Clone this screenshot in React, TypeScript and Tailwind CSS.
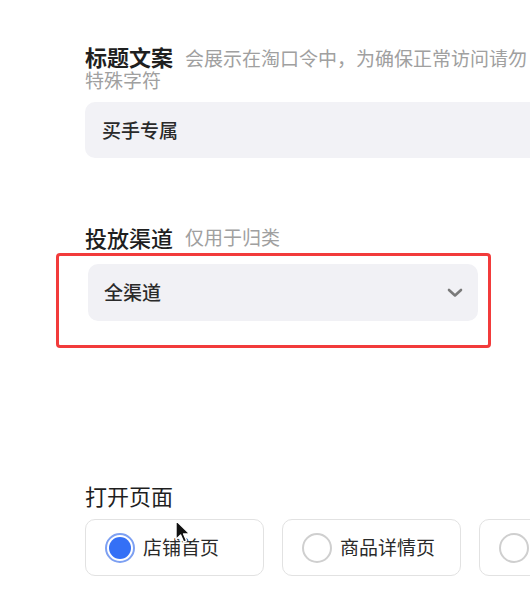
const font = { fontFamily: '"Noto Sans CJK SC", "Noto Sans", sans-serif' };

const Radio = ({ checked }: { checked?: boolean }) =>
    checked ? (
        <span className="flex h-[30px] w-[30px] shrink-0 items-center justify-center rounded-full border-2 border-[#7da0f2] bg-white">
            <span className="h-[22px] w-[22px] rounded-full bg-[#3470f6]" />
        </span>
    ) : (
        <span className="h-[30px] w-[30px] shrink-0 rounded-full border-2 border-[#cfcfcf] bg-white" />
    );

const options = [
    { label: '店铺首页', checked: true },
    { label: '商品详情页', checked: false },
    { label: '自定义链接', checked: false },
];

const App = () => {
    return (
        <div className="relative h-[596px] w-[530px] overflow-hidden bg-white text-[#222]" style={font}>
            <div className="w-[452px] pl-[85px] pt-[46px] box-content">
                {/* title copy */}
                <p className="text-[22px] leading-[20px]">
                    <span className="mr-[12px] font-semibold text-[#1f1f1f]">标题文案</span>
                    <span className="text-[19px] text-[#a0a0a0]">会展示在淘口令中，为确保正常访问请勿特殊字符</span>
                </p>
                <div className="mt-[12px] flex h-[56px] w-[470px] items-center rounded-[10px] bg-[#f2f2f6] px-[17px] text-[19px] font-medium text-[#2a2a2a]">
                    买手专属
                </div>

                {/* channel */}
                <div className="mt-[65px] flex h-[28px] items-center">
                    <span className="text-[22px] font-medium text-[#1f1f1f]">投放渠道</span>
                    <span className="ml-[12px] text-[19px] text-[#a0a0a0]">仅用于归类</span>
                </div>
                <div className="relative mt-[13px]">
                    <div className="ml-[3px] flex h-[57px] w-[390px] items-center justify-between rounded-[10px] bg-[#f1f1f5] pl-[16px] pr-[15px] text-[19px] font-medium text-[#2a2a2a]">
                        <span>全渠道</span>
                        <svg width="16" height="10" viewBox="0 0 16 10" fill="none">
                            <path d="M2 2l6 5.5L14 2" stroke="#7a7a7a" strokeWidth="2.6" strokeLinecap="round" strokeLinejoin="round" />
                        </svg>
                    </div>
                    <div className="absolute left-[-29px] top-[-11px] h-[95px] w-[435px] rounded-[4px] border-[3px] border-[#f23b3b]" />
                </div>

                {/* open page */}
                <div className="mt-[160px] flex h-[28px] items-center text-[22px] text-[#1f1f1f]">打开页面</div>
                <div className="mt-[10px] flex gap-[18px]">
                    {options.map((o) => (
                        <div
                            key={o.label}
                            className="flex h-[57px] w-[179px] shrink-0 items-center gap-[8px] rounded-[10px] border-[1.5px] border-[#e2e2e2] pl-[19px] text-[19px] text-[#2a2a2a]"
                        >
                            <Radio checked={o.checked} />
                            <span>{o.label}</span>
                        </div>
                    ))}
                </div>
            </div>

            {/* mouse cursor */}
            <svg className="absolute left-[174px] top-[519px]" width="18" height="26" viewBox="0 0 18 26">
                <path d="M2 1.5v19l4.6-4.4 3 7 3-1.3-3-6.8h6.2z" fill="#111" stroke="#fff" strokeWidth="1.4" strokeLinejoin="round" />
            </svg>
        </div>
    );
};

export default App;
